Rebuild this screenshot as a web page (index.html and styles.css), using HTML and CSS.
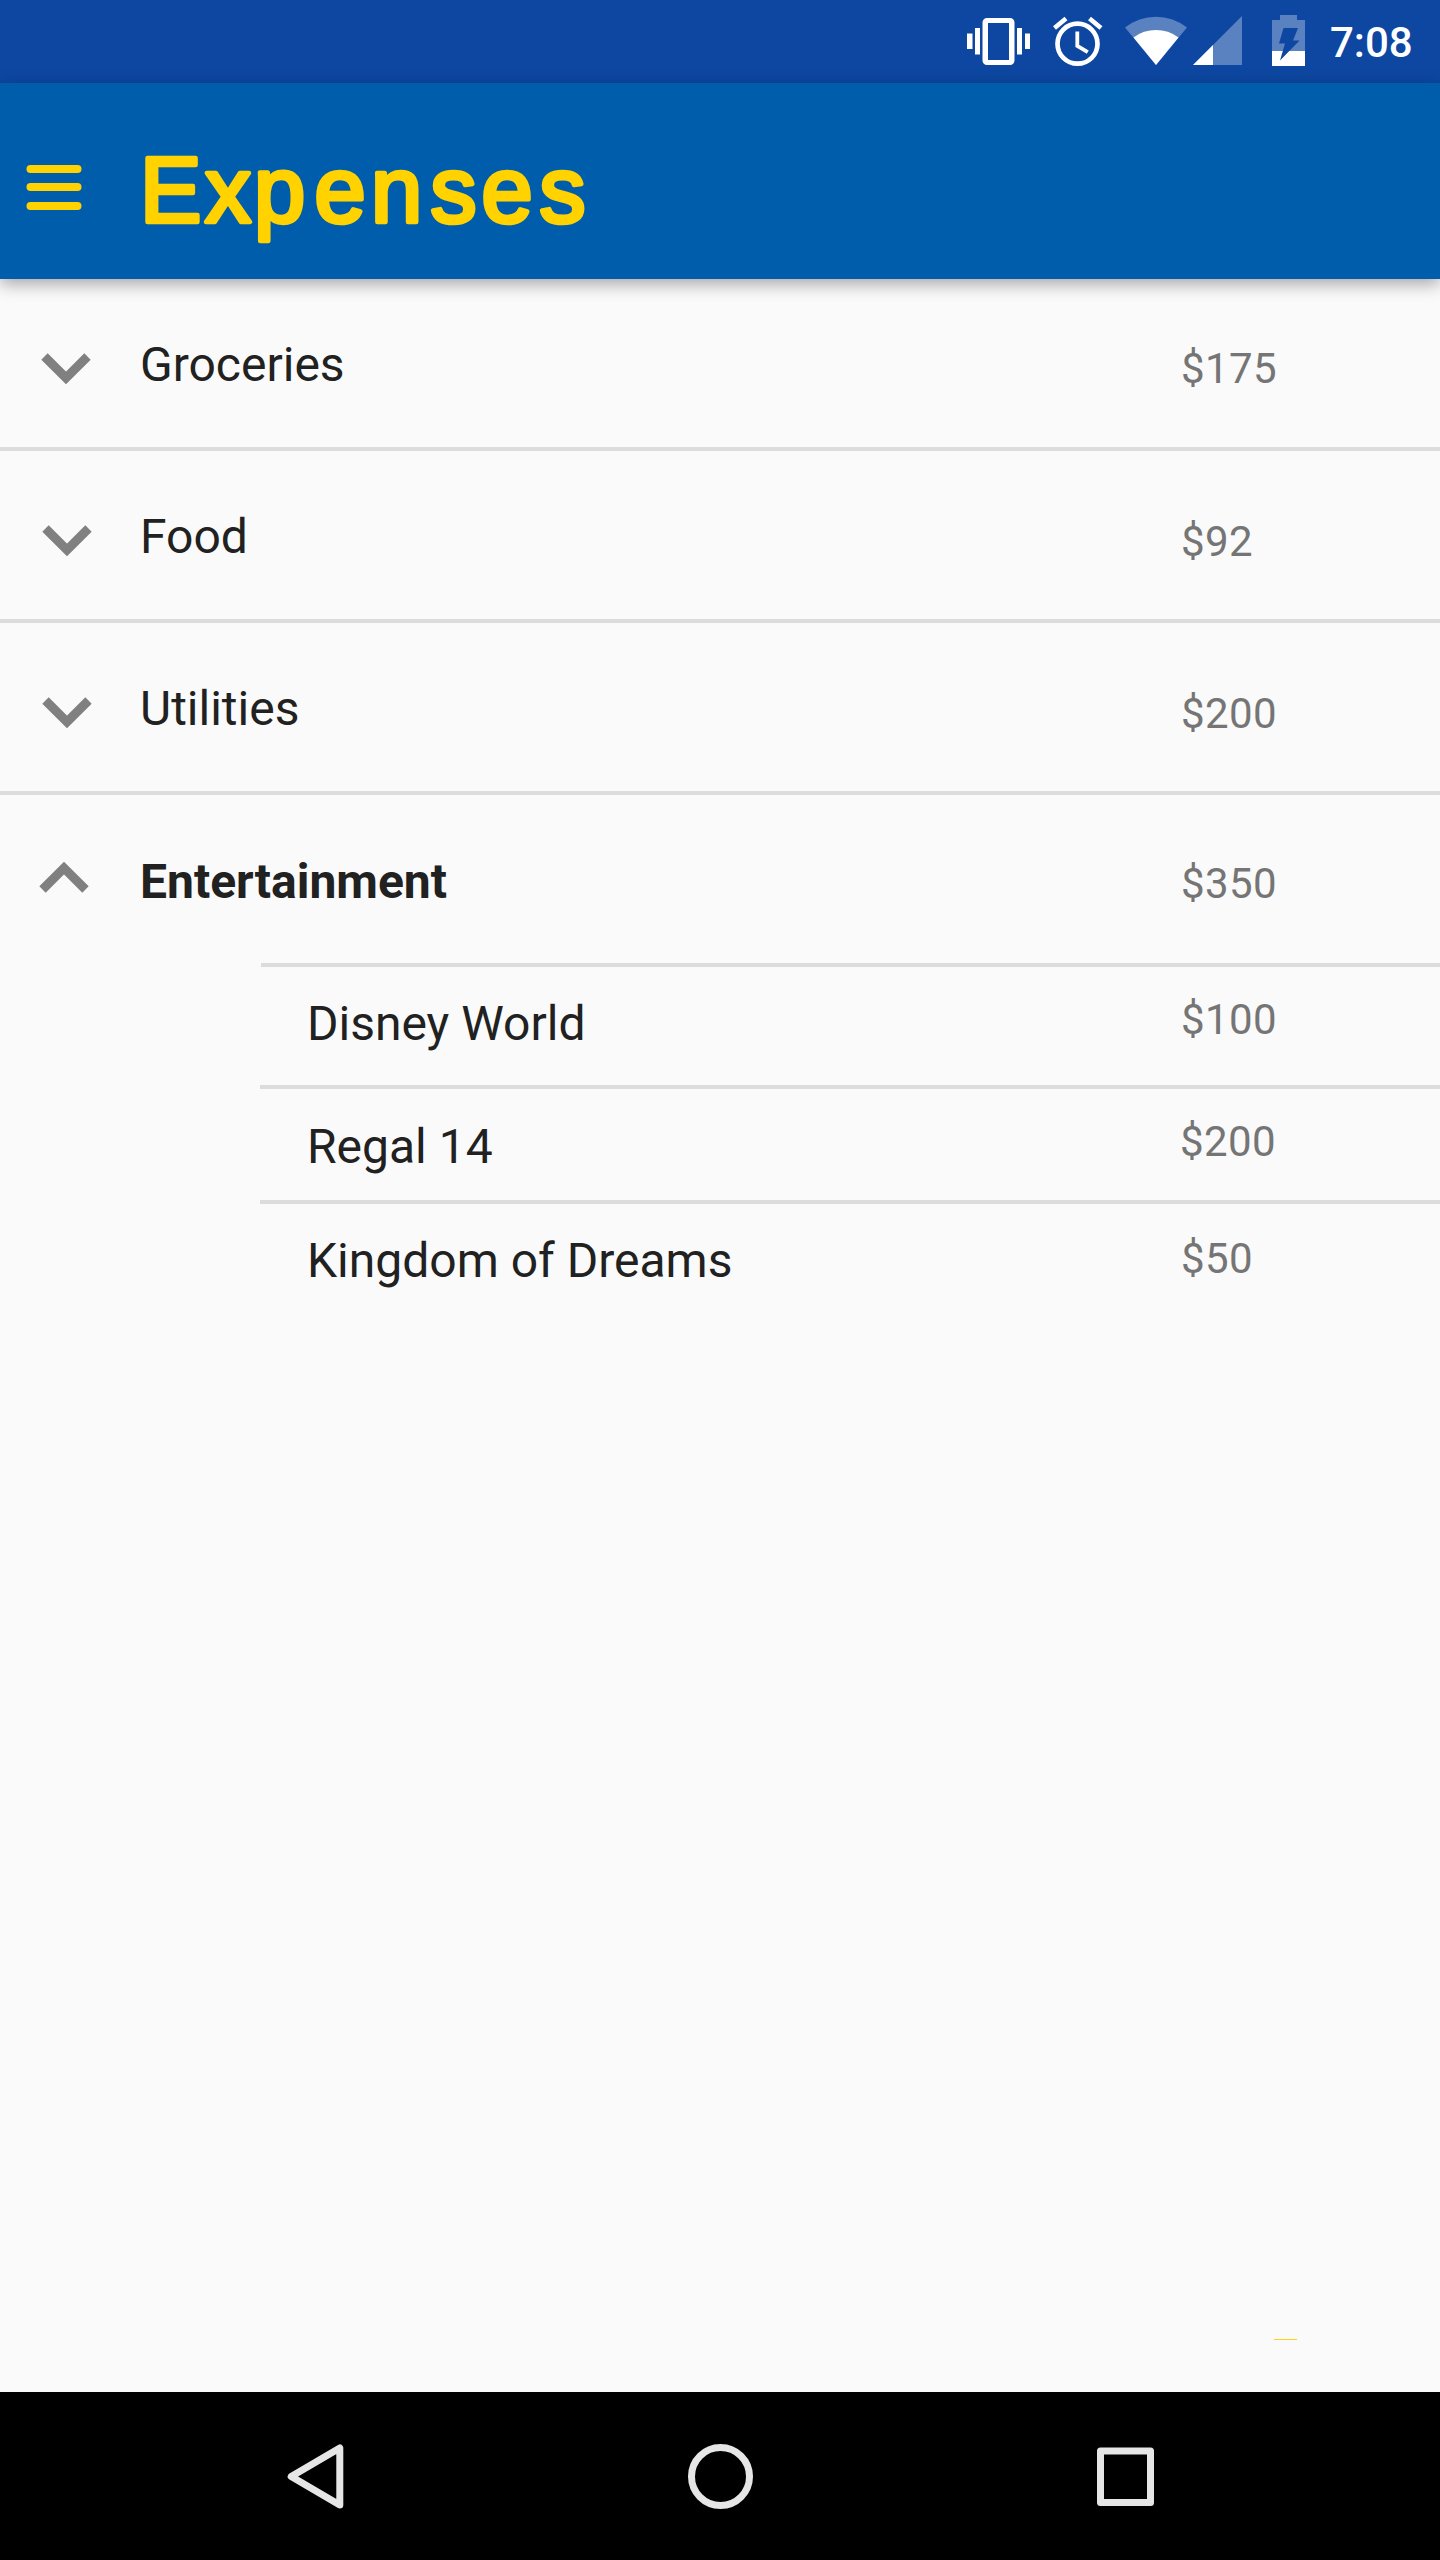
FILE: index.html
```html
<!DOCTYPE html>
<html lang="en">
<head>
<meta charset="utf-8">
<title>Expenses</title>
<link rel="stylesheet" href="styles.css">
</head>
<body>
<div class="screen">
  <div class="status">
    <svg class="status-icons" width="370" height="83" viewBox="960 0 370 83">
      <g fill="#fff">
        <path fill-rule="evenodd" d="M987 18h23a4.500 4.500 0 0 1 4.500 4.500v38a4.500 4.500 0 0 1-4.500 4.500h-23a4.500 4.500 0 0 1-4.500-4.500v-38a4.500 4.500 0 0 1 4.500-4.500zM988 23v37h21v-37z"/>
        <path d="M967 33.500h5.500v15.500h-5.500zM975 28h5v26.500h-5zM1017 28h5v26.500h-5zM1025 33.500h5v15.500h-5z"/>
      </g>
      <g fill="none" stroke="#fff">
        <circle cx="1077.500" cy="43.700" r="20" stroke-width="4.700"/>
        <path d="M1077.300 31.500v14.300l10.500 6.300" stroke-width="3.800"/>
        <path d="M1066 18.500l-11.500 9.500M1089.500 18.500l11.500 9.500" stroke-width="4.600"/>
      </g>
      <path d="M1125 27.500a50 50 0 0 1 62 0L1156 65z" fill="#5a81c0"/>
      <path d="M1133.500 37.500a38 38 0 0 1 45 0L1156 65z" fill="#fff"/>
      <path d="M1193 65L1242 16v49z" fill="#5a81c0"/>
      <path d="M1193 65L1213 45v20z" fill="#fff"/>
      <path d="M1272 51V20h8v-5h17v5h8v31z" fill="#5a81c0"/>
      <path d="M1272 51h33v15h-33z" fill="#fff"/>
      <path d="M1283.500 28h14.500l-5 12.500h6.500l-19.500 20 5-17h-6z" fill="#0d47a1"/>
    </svg>
    <span class="clock">7:08</span>
  </div>
  <header class="appbar">
    <svg width="620" height="196" viewBox="0 83 620 196">
      <g fill="#ffd200">
        <rect x="26.500" y="165" width="55" height="8" rx="4"/>
        <rect x="26.500" y="183" width="55" height="8" rx="4"/>
        <rect x="26.500" y="202" width="55" height="8" rx="4"/>
      </g>
      <text class="title" x="140 205 254 314.500 371 430.500 481.500 539.500" y="221.500">Expenses</text>
    </svg>
  </header>
  <main class="list">
    <div class="row first">
      <svg class="chev" width="50" height="33" viewBox="0 0 50 33"><path d="M3.500 4.500L25 26 46.500 4.500"/></svg>
      <span class="name">Groceries</span><span class="amount">$175</span>
    </div>
    <div class="row">
      <svg class="chev" width="50" height="33" viewBox="0 0 50 33"><path d="M3.500 4.500L25 26 46.500 4.500"/></svg>
      <span class="name">Food</span><span class="amount">$92</span>
    </div>
    <div class="row">
      <svg class="chev" width="50" height="33" viewBox="0 0 50 33"><path d="M3.500 4.500L25 26 46.500 4.500"/></svg>
      <span class="name">Utilities</span><span class="amount">$200</span>
    </div>
    <div class="row open">
      <svg class="chev" width="50" height="33" viewBox="0 0 50 33"><path d="M3.500 28.500L25 7 46.500 28.500"/></svg>
      <span class="name">Entertainment</span><span class="amount">$350</span>
    </div>
    <div class="sub disney"><span class="name">Disney World</span><span class="amount">$100</span></div>
    <div class="sub regal"><span class="name">Regal 14</span><span class="amount">$200</span></div>
    <div class="sub kingdom"><span class="name">Kingdom of Dreams</span><span class="amount">$50</span></div>
  </main>
  <div class="accent"></div>
  <nav class="nav">
    <svg width="1440" height="168" viewBox="0 2392 1440 168" fill="none" stroke="#e6e6e6" stroke-width="7" stroke-linejoin="round">
      <path d="M339.800 2448v57L291.200 2476.500z"/>
      <circle cx="720.500" cy="2476.500" r="29"/>
      <rect x="1100.500" y="2451" width="50" height="51.500"/>
    </svg>
  </nav>
</div>
</body>
</html>
```
FILE: styles.css
```css
body {
  margin: 0;
  font-family: Roboto, sans-serif;
}
.screen {
  width: 1440px;
  height: 2560px;
  display: flex;
  flex-direction: column;
  background: #fafafa;
  overflow: hidden;
}
.status {
  height: 83px;
  flex: none;
  display: flex;
  background: #0d47a1;
  padding-left: 960px;
}
.clock {
  color: #fff;
  font-size: 42px;
  font-weight: 500;
  line-height: 50px;
  padding-top: 18px;
  white-space: nowrap;
}
.appbar {
  height: 196px;
  flex: none;
  background: #005dab;
  box-shadow: 0 5px 16px rgba(0, 0, 0, 0.34);
}
.title {
  font-family: "Arial Rounded MT Bold", "Liberation Sans", Arial, sans-serif;
  font-size: 92px;
  fill: #ffd200;
  stroke: #ffd200;
  stroke-width: 4.500px;
  stroke-linejoin: round;
}
svg {
  display: block;
}
.list {
  flex: 1;
}
.row {
  height: 168px;
  display: grid;
  grid-template-columns: 100px 1040px 1fr;
  border-bottom: 4px solid #dcdcdc;
  color: #212121;
}
.row .chev {
  margin: 73px 0 0 42px;
}
.chev path {
  fill: none;
  stroke: #808080;
  stroke-width: 9px;
}
.row .name {
  padding: 58px 0 0 40px;
}
.row .amount {
  padding: 66px 0 0 41px;
}
.first .chev {
  margin-left: 41px;
}
.first .amount {
  padding-top: 65px;
}
.name {
  font-size: 48px;
  line-height: 56px;
}
.amount {
  color: #757575;
  font-size: 42px;
  line-height: 50px;
  letter-spacing: 0.4px;
}
.open {
  font-weight: 700;
  border-bottom: 0;
}
.open .chev {
  margin: 66px 0 0 39px;
}
.open .name {
  padding-top: 59px;
}
.open .amount {
  font-weight: 400;
  padding-top: 64px;
}
.sub {
  display: grid;
  grid-template-columns: 874px 1fr;
  margin-left: 260px;
  border-top: 4px solid #dcdcdc;
  color: #212121;
}
.sub .name {
  padding-left: 47px;
}
.sub .amount {
  padding-left: 47px;
}
.disney {
  height: 118px;
  margin-left: 261px;
  grid-template-columns: 873px 1fr;
}
.disney .name {
  padding: 29px 0 0 46px;
}
.disney .amount {
  padding-top: 28px;
}
.regal {
  height: 111px;
}
.regal .name {
  padding-top: 30px;
}
.regal .amount {
  padding: 28px 0 0 46px;
}
.kingdom .name {
  padding-top: 29px;
}
.kingdom .amount {
  padding-top: 30px;
}
.accent {
  width: 23px;
  height: 1px;
  margin: 0 0 52px 1274px;
  background: #ffd21c;
}
.nav {
  height: 168px;
  flex: none;
  background: #000;
}
```
